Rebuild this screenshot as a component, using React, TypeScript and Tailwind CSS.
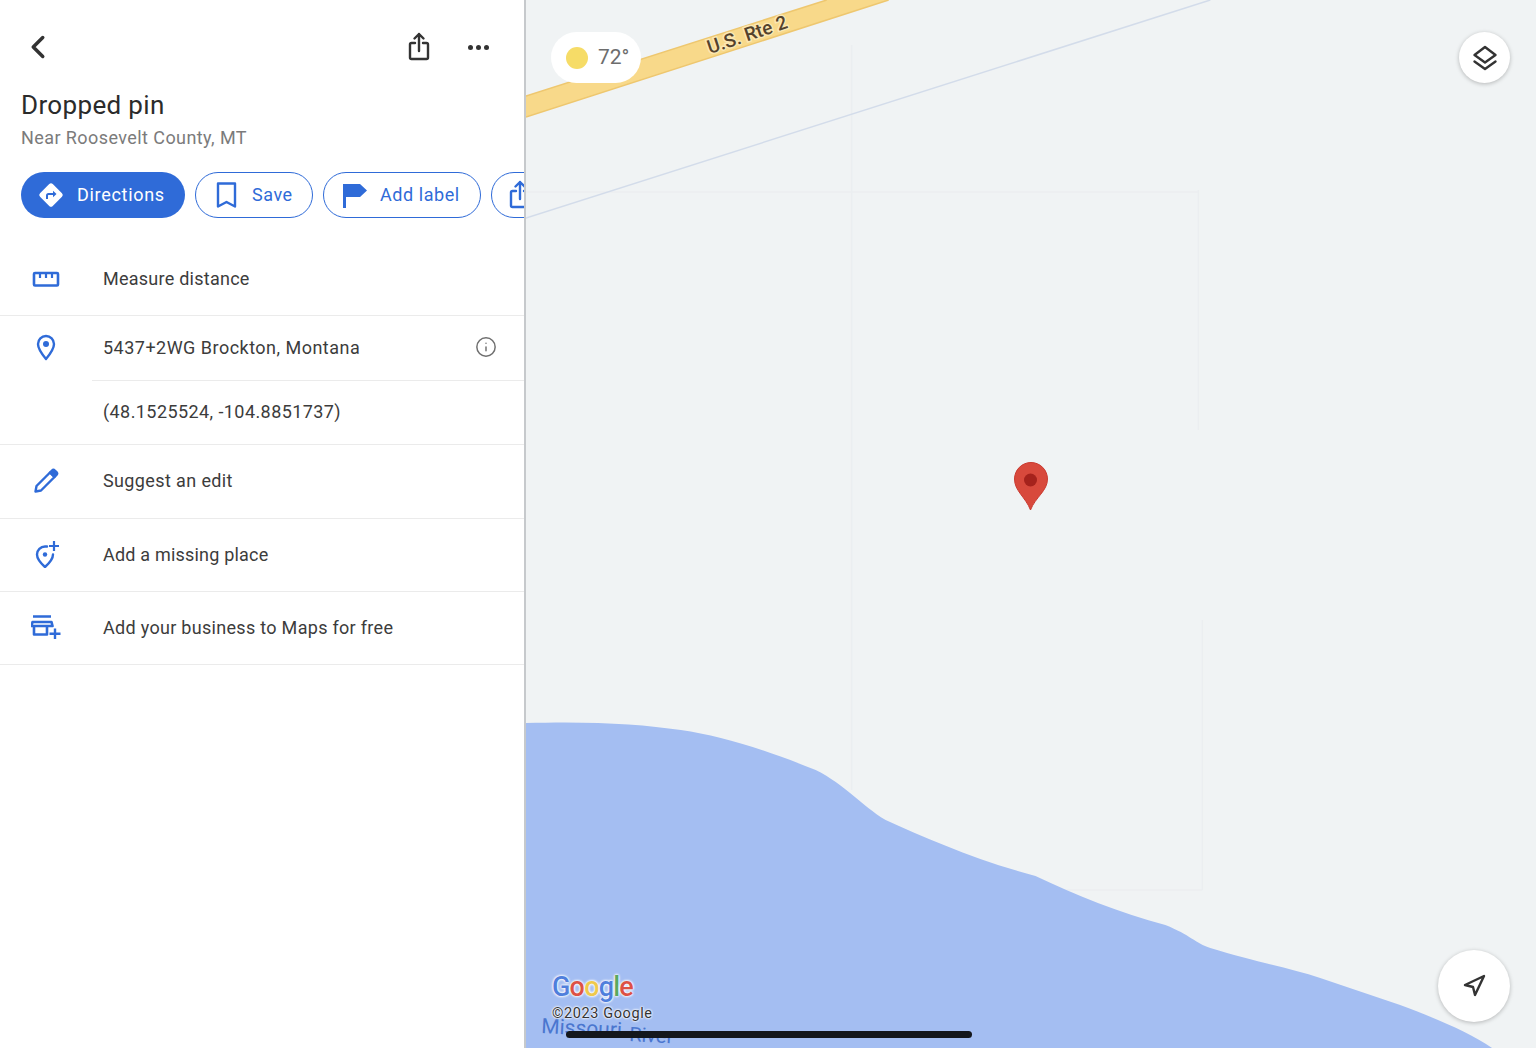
import type { ReactNode } from 'react';
import { ChevronLeft, Info, Navigation } from 'lucide-react';

const blue = '#2f6bd8';

function ShareIcon({ className, color }: { className: string; color: string }) {
  return (
    <svg className={className} viewBox="0 0 24 30" fill="none" stroke={color} strokeWidth="2.4" strokeLinecap="round" strokeLinejoin="round">
      <path d="M12 19V2M7.500 6.500 12 2l4.500 4.500" />
      <path d="M8 11H4.500a1.500 1.500 0 0 0-1.500 1.500v13A1.500 1.500 0 0 0 4.500 27h15a1.500 1.500 0 0 0 1.500-1.500v-13a1.500 1.500 0 0 0-1.500-1.500H16" />
    </svg>
  );
}

function DirectionsIcon() {
  return (
    <svg className="h-7 w-7" viewBox="0 0 28 28">
      <rect x="5" y="5" width="18" height="18" rx="2.500" fill="#fff" transform="rotate(45 14 14)" />
      <path d="M10 18v-3.500a1.500 1.500 0 0 1 1.500-1.500H18" fill="none" stroke={blue} strokeWidth="2" />
      <path d="M16 9.800 19.500 13 16 16.200z" fill={blue} />
    </svg>
  );
}

function BookmarkIcon() {
  return (
    <svg className="h-7 w-6" viewBox="0 0 24 28" fill="none" stroke={blue} strokeWidth="2.400">
      <path d="M3 2.500h17v23l-8.500-4.500L3 25.500z" strokeLinejoin="round" />
    </svg>
  );
}

function FlagIcon() {
  return (
    <svg className="h-7 w-6" viewBox="0 0 24 28" fill={blue}>
      <path d="M0 3h17l7 6.500-7 6.500H3v11H0z" />
    </svg>
  );
}

function RulerIcon() {
  return (
    <svg className="h-[18px] w-7" viewBox="0 0 28 18" fill="none" stroke={blue} strokeWidth="2.600">
      <rect x="2" y="3" width="24" height="12.500" rx="1" />
      <path d="M8 3v5M14 3v5M20 3v5" strokeWidth="2.200" />
    </svg>
  );
}

function PinIcon() {
  return (
    <svg className="h-[27px] w-[20px]" viewBox="0 0 20 27" fill="none">
      <path d="M10 25C5 19 2 15 2 10a8 8 0 0 1 16 0c0 5-3 9-8 15z" stroke={blue} strokeWidth="2.400" strokeLinejoin="round" />
      <circle cx="10" cy="10" r="3" fill={blue} />
    </svg>
  );
}

function PencilIcon() {
  return (
    <svg className="h-[26px] w-[26px]" viewBox="0 0 26 26" fill="none" stroke={blue} strokeWidth="2.400" strokeLinejoin="round">
      <path d="M2.500 23.500 3.500 18 17 4.500 21.500 9 8 22.500z" />
      <path d="M19 2.500a2 2 0 0 1 2.800 0l1.700 1.700a2 2 0 0 1 0 2.800L21.500 9 17 4.500z" fill={blue} />
    </svg>
  );
}

function AddPlaceIcon() {
  return (
    <svg className="ml-[2px] h-[28px] w-[26px]" viewBox="0 0 26 28" fill="none" stroke={blue} strokeWidth="2.400">
      <path d="M13 6.500H11a8 8 0 0 0-8 8c0 4.500 3 8 8 12.500 5-4.500 8-8 8-12.500" strokeLinecap="round" strokeLinejoin="round" />
      <circle cx="11" cy="14.500" r="2.200" fill={blue} stroke="none" />
      <path d="M20 1v10M15 6h10" strokeWidth="2.200" />
    </svg>
  );
}

function BusinessIcon() {
  return (
    <svg className="h-[26px] w-[30px]" viewBox="0 0 30 26" fill="none" stroke={blue} strokeWidth="2.600">
      <path d="M2 2.500h18M1.500 8h19l1 4H.5zM3 12v8.500h13V12" strokeLinejoin="round" />
      <path d="M24 14.500V25M18.500 19.700H29.500" strokeWidth="2.400" />
    </svg>
  );
}

function LayersIcon() {
  return (
    <svg className="h-[28px] w-[28px]" viewBox="0 0 28 28" fill="none" stroke="#333" strokeWidth="2.400" strokeLinejoin="round" strokeLinecap="round">
      <path d="M14 3 24.500 11 14 18.500 3.500 11z" />
      <path d="M3.500 17.500 14 25l10.500-7.500" />
    </svg>
  );
}

function ActionChip({ icon, label, className }: { icon: ReactNode; label: string; className: string }) {
  return (
    <button className={`flex h-[46px] shrink-0 items-center rounded-full border border-[#2f6bd8] bg-white pb-[1px] pl-[19px] text-[18px] tracking-[0.55px] text-[#2f6bd8] ${className}`} type="button">
      {icon}
      <span>{label}</span>
    </button>
  );
}

function PlaceRow({ icon, label, className }: { icon: ReactNode; label: string; className: string }) {
  return (
    <div className={`flex items-center border-b border-[#ebebeb] ${className}`}>
      <div className="flex w-[103px] shrink-0 justify-center pr-[11px]">{icon}</div>
      <span className="text-[18px] text-[#3c3c3c]">{label}</span>
    </div>
  );
}

function PlacePanel() {
  return (
    <section className="z-10 h-full w-[526px] shrink-0 overflow-hidden border-r-2 border-[#c6c9cc] bg-white">
      <div className="flex h-[92px] items-center pl-[19px] pr-[35px] pt-[2px]">
        <ChevronLeft className="h-[38px] w-[38px] text-[#333]" strokeWidth={2.200} />
        <div className="ml-auto flex items-center gap-[37px]">
          <ShareIcon className="h-[30px] w-[24px]" color="#333" />
          <div className="flex gap-[3px]">
            <span className="h-[5px] w-[5px] rounded-full bg-[#333]" />
            <span className="h-[5px] w-[5px] rounded-full bg-[#333]" />
            <span className="h-[5px] w-[5px] rounded-full bg-[#333]" />
          </div>
        </div>
      </div>
      <h1 className="pl-[21px] text-[26px] leading-[26px] tracking-[0.35px] text-[#2b2b2b]">Dropped pin</h1>
      <p className="mt-[8px] pl-[21px] text-[18px] leading-[24px] tracking-[0.42px] text-[#7b7b7b]">Near Roosevelt County, MT</p>

      <div className="mt-[22px] flex gap-[10px] pl-[21px]">
        <button className="flex h-[46px] w-[164px] shrink-0 items-center gap-[12px] rounded-full bg-[#2f6bd8] pb-[1px] pl-[16px] text-[18px] tracking-[0.7px] text-white" type="button">
          <DirectionsIcon />
          <span>Directions</span>
        </button>
        <ActionChip className="w-[118px] gap-[13px]" icon={<BookmarkIcon />} label="Save" />
        <ActionChip className="w-[158px] gap-[13px]" icon={<FlagIcon />} label="Add label" />
        <button className="flex h-[46px] w-[80px] shrink-0 items-center rounded-full border border-[#2f6bd8] pl-[16px]" type="button">
          <ShareIcon className="h-[30px] w-[24px]" color={blue} />
        </button>
      </div>

      <div className="mt-[26px]">
        <PlaceRow className="h-[72px] pb-[2px] tracking-[0.25px]" icon={<RulerIcon />} label="Measure distance" />
        <div className="border-b border-[#ebebeb]">
          <div className="flex h-[64px] items-center pb-[2px]">
            <div className="flex w-[103px] shrink-0 justify-center pr-[11px]"><PinIcon /></div>
            <span className="text-[18px] tracking-[0.48px] text-[#3c3c3c]">5437+2WG Brockton, Montana</span>
            <Info className="ml-auto mr-[27px] h-[22px] w-[22px] text-[#6f6f6f]" strokeWidth={1.600} />
          </div>
          <div className="ml-[92px] flex h-[64px] items-center border-t border-[#ebebeb] pb-[2px] pl-[11px]">
            <span className="text-[18px] tracking-[0.42px] text-[#3c3c3c]">(48.1525524, -104.8851737)</span>
          </div>
        </div>
        <PlaceRow className="h-[74px] pb-[2px] tracking-[0.38px]" icon={<PencilIcon />} label="Suggest an edit" />
        <PlaceRow className="h-[73px] pb-[2px] tracking-[0.2px]" icon={<AddPlaceIcon />} label="Add a missing place" />
        <PlaceRow className="h-[73px] pb-[2px] tracking-[0.3px]" icon={<BusinessIcon />} label="Add your business to Maps for free" />
      </div>
    </section>
  );
}

function MapDrawing() {
  return (
    <svg className="absolute inset-0 h-full w-full" viewBox="525 0 1011 1048" preserveAspectRatio="none">
      <rect x="525" y="0" width="1011" height="1048" fill="#f0f3f4" />
      <g stroke="#ebeef0" strokeWidth="1.500" fill="none">
        <path d="M851 45V790M525 192H1198M1198 190V430M1202 620V890M851 890H1202" />
      </g>
      <path d="M525 218 1210 0" stroke="#d3dcea" strokeWidth="1.500" />
      <path d="M525 96 826 0H888L525 117z" fill="#f8d98a" />
      <path d="M525 96 826 0M525 117 888 0" stroke="#eec76f" strokeWidth="1.500" />
      <text x="0" y="0" transform="translate(709 54) rotate(-18.500)" fontFamily="Roboto, sans-serif" fontSize="19" fontWeight="500" fill="#54422c" stroke="#fbe7b2" strokeWidth="3" paintOrder="stroke">U.S. Rte 2</text>
      <path d="M525 723C590 721 640 724 680 730S760 748 815 770C845 785 860 805 885 820C925 838 975 860 1035 876C1075 895 1120 913 1165 925C1190 935 1195 943 1210 948C1255 962 1290 968 1320 978L1400 1005C1440 1020 1470 1033 1492 1048H525z" fill="#a4bef2" />
      <text x="540" y="1033" transform="rotate(3 540 1033)" fontFamily="Roboto, sans-serif" fontSize="21" fill="#4a76cf">Missouri</text>
      <text x="628" y="1041" transform="rotate(3 628 1041)" fontFamily="Roboto, sans-serif" fontSize="20" fill="#4a76cf">River</text>
      <path d="M1030 510C1025 497 1014 491 1014 479a16.500 16.500 0 0 1 33 0C1047 491 1035 497 1030 510z" fill="#d8493c" stroke="#c9392f" strokeWidth="1" />
      <circle cx="1030" cy="480" r="6.500" fill="#a5221c" />
    </svg>
  );
}

function MapPanel() {
  return (
    <main className="relative h-full flex-1 overflow-hidden">
      <MapDrawing />
      <div className="absolute left-[25px] top-[32px] flex h-[51px] w-[90px] items-center gap-[10px] rounded-full bg-white pl-[15px] text-[21px] text-[#6d6d6d]">
        <span className="h-[22px] w-[22px] rounded-full bg-[#f6dc67]" />
        <span>72°</span>
      </div>
      <div className="absolute right-[26px] top-[32px] flex h-[51px] w-[51px] items-center justify-center rounded-full bg-white shadow-[0_1px_4px_rgba(0,0,0,0.25)]">
        <LayersIcon />
      </div>
      <div className="absolute bottom-[26px] right-[26px] flex h-[72px] w-[72px] items-center justify-center rounded-full bg-white shadow-[0_1px_4px_rgba(0,0,0,0.25)]">
        <Navigation className="h-[24px] w-[24px] text-[#333]" strokeWidth={2.400} />
      </div>
      <div className="absolute left-[26px] top-[968px] text-[27px] font-medium leading-[38px] tracking-[-0.8px] [text-shadow:0_0_2px_#fff,0_0_3px_#fff,0_0_3px_#fff]">
        <span className="text-[#4f7fdc]">G</span>
        <span className="text-[#dd5145]">o</span>
        <span className="text-[#efc94c]">o</span>
        <span className="text-[#4f7fdc]">g</span>
        <span className="text-[#5aa85f]">l</span>
        <span className="text-[#dd5145]">e</span>
      </div>
      <div className="absolute left-[26px] top-[1005px] text-[14.500px] leading-[17px] tracking-[0.6px] text-[#333] [text-shadow:0_0_2px_#fff,0_0_2px_#fff,0_0_3px_#fff]">©2023 Google</div>
      <div className="absolute left-[40px] top-[1031px] h-[7px] w-[406px] rounded-full bg-[#14171c]" />
    </main>
  );
}

export default function App() {
  return (
    <div className="flex h-[1048px] w-[1536px] overflow-hidden bg-white font-['Roboto',sans-serif]">
      <PlacePanel />
      <MapPanel />
    </div>
  );
}
